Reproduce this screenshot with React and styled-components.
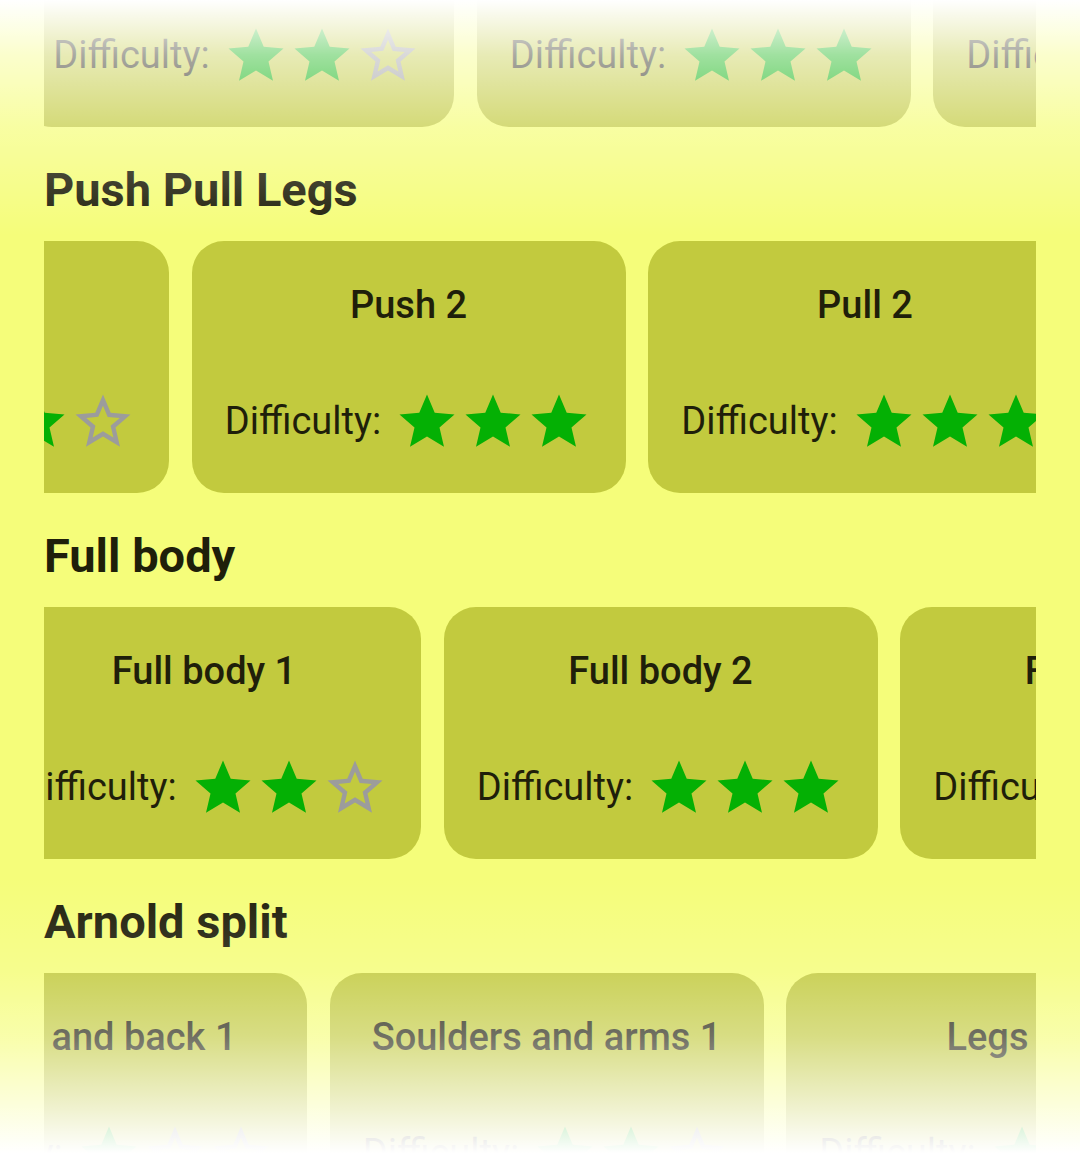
import React, { useLayoutEffect, useRef } from "react";
import styled, { createGlobalStyle } from "styled-components";

const GlobalStyle = createGlobalStyle`
  html, body, #root { margin: 0; padding: 0; height: 100%; }
  body {
    background: #f5fd7a;
    font-family: Roboto, "Noto Sans", "Liberation Sans", sans-serif;
    color: #1f1f0a;
  }
  * { box-sizing: border-box; }
`;

const Screen = styled.div`
  position: relative;
  height: 100vh;
  background: #f5fd7a;
`;

const ScrollArea = styled.main`
  height: 100%;
  overflow-y: auto;
  scrollbar-width: none;
  padding: 0 44px 60px;
  &::-webkit-scrollbar { display: none; }
`;

const Fade = styled.div`
  position: absolute;
  inset: 0;
  pointer-events: none;
  background: linear-gradient(
    to bottom,
    rgba(255, 255, 255, 1) 0px,
    rgba(255, 255, 255, 0.62) 55px,
    rgba(255, 255, 255, 0.3) 127px,
    rgba(255, 255, 255, 0) 235px,
    rgba(255, 255, 255, 0) calc(100% - 275px),
    rgba(255, 255, 255, 0.15) calc(100% - 180px),
    rgba(255, 255, 255, 0.36) calc(100% - 117px),
    rgba(255, 255, 255, 0.72) calc(100% - 50px),
    rgba(255, 255, 255, 1) 100%
  );
`;

const Section = styled.section`
  display: flex;
  flex-direction: column;
`;

const SectionTitle = styled.h2`
  margin: 0;
  padding: 35px 0 24px;
  font-family: Roboto, "Noto Sans", sans-serif;
  font-weight: 700;
  font-size: 47px;
  line-height: 55px;
  color: #1f1f0a;
`;

const Track = styled.div`
  display: flex;
  gap: 22.5px;
  overflow-x: auto;
  scrollbar-width: none;
  &::-webkit-scrollbar { display: none; }
`;

const Card = styled.div`
  flex: 0 0 434px;
  height: 252px;
  border-radius: 32px;
  background: #c2ca3e;
  padding: 42px 0 38px;
  display: flex;
  flex-direction: column;
  align-items: center;
`;

const CardTitle = styled.div`
  font-weight: 500;
  font-size: 38px;
  line-height: 44.5px;
  color: #1f1f0a;
  white-space: nowrap;
  margin-bottom: 61px;
`;

const DifficultyRow = styled.div`
  display: flex;
  align-items: center;
  gap: 13px;
`;

const Label = styled.span`
  font-weight: 400;
  font-size: 38px;
  line-height: 44.5px;
  color: #1f1f0a;
  white-space: nowrap;
`;

const Stars = styled.div`
  display: flex;
`;

const StarSvg = styled.svg`
  width: 66px;
  height: 66px;
  flex: 0 0 66px;
  display: block;
  fill: ${(p) => (p.$filled ? "#04b004" : "#9c9c9c")};
`;

const FULL =
  "M12 17.27L18.18 21l-1.64-7.03L22 9.24l-7.19-.61L12 2 9.19 8.63 2 9.24l5.46 4.73L5.82 21z";
const BORDER =
  "M22 9.24l-7.19-.62L12 2 9.19 8.63 2 9.24l5.46 4.73L5.82 21 12 17.27 18.18 21l-1.63-7.03L22 9.24zM12 15.4l-3.76 2.27 1-4.28-3.32-2.88 4.38-.38L12 6.1l1.71 4.04 4.38.38-3.32 2.88 1 4.28L12 15.4z";

function Star({ filled }) {
  return (
    <StarSvg viewBox="0 0 24 24" $filled={filled} aria-hidden="true">
      <path d={filled ? FULL : BORDER} />
    </StarSvg>
  );
}

function WorkoutCard({ name, difficulty }) {
  return (
    <Card>
      <CardTitle>{name}</CardTitle>
      <DifficultyRow>
        <Label>Difficulty:</Label>
        <Stars>
          {[0, 1, 2].map((i) => (
            <Star key={i} filled={i < difficulty} />
          ))}
        </Stars>
      </DifficultyRow>
    </Card>
  );
}

function WorkoutRow({ workouts, scroll }) {
  const ref = useRef(null);
  useLayoutEffect(() => {
    if (ref.current) ref.current.scrollLeft = scroll;
  }, [scroll]);
  return (
    <Track ref={ref}>
      {workouts.map((w) => (
        <WorkoutCard key={w.name} name={w.name} difficulty={w.difficulty} />
      ))}
    </Track>
  );
}

const sections = [
  {
    title: "Upper lower",
    scroll: 24,
    workouts: [
      { name: "Upper 1", difficulty: 2 },
      { name: "Lower 1", difficulty: 3 },
      { name: "Upper 2", difficulty: 3 },
      { name: "Lower 2", difficulty: 3 },
    ],
  },
  {
    title: "Push Pull Legs",
    scroll: 1222,
    workouts: [
      { name: "Push 1", difficulty: 2 },
      { name: "Pull 1", difficulty: 2 },
      { name: "Legs 1", difficulty: 2 },
      { name: "Push 2", difficulty: 3 },
      { name: "Pull 2", difficulty: 3 },
      { name: "Legs 2", difficulty: 3 },
    ],
  },
  {
    title: "Full body",
    scroll: 57,
    workouts: [
      { name: "Full body 1", difficulty: 2 },
      { name: "Full body 2", difficulty: 3 },
      { name: "Full body 3", difficulty: 3 },
    ],
  },
  {
    title: "Arnold split",
    scroll: 171,
    workouts: [
      { name: "Chest and back 1", difficulty: 1 },
      { name: "Soulders and arms 1", difficulty: 2 },
      { name: "Legs 1", difficulty: 1 },
      { name: "Chest and back 2", difficulty: 2 },
    ],
  },
];

export default function App() {
  const ref = useRef(null);
  useLayoutEffect(() => {
    if (ref.current) ref.current.scrollTop = 239;
  }, []);
  return (
    <>
      <GlobalStyle />
      <Screen>
        <ScrollArea ref={ref}>
          {sections.map((s) => (
            <Section key={s.title}>
              <SectionTitle>{s.title}</SectionTitle>
              <WorkoutRow workouts={s.workouts} scroll={s.scroll} />
            </Section>
          ))}
        </ScrollArea>
        <Fade />
      </Screen>
    </>
  );
}
